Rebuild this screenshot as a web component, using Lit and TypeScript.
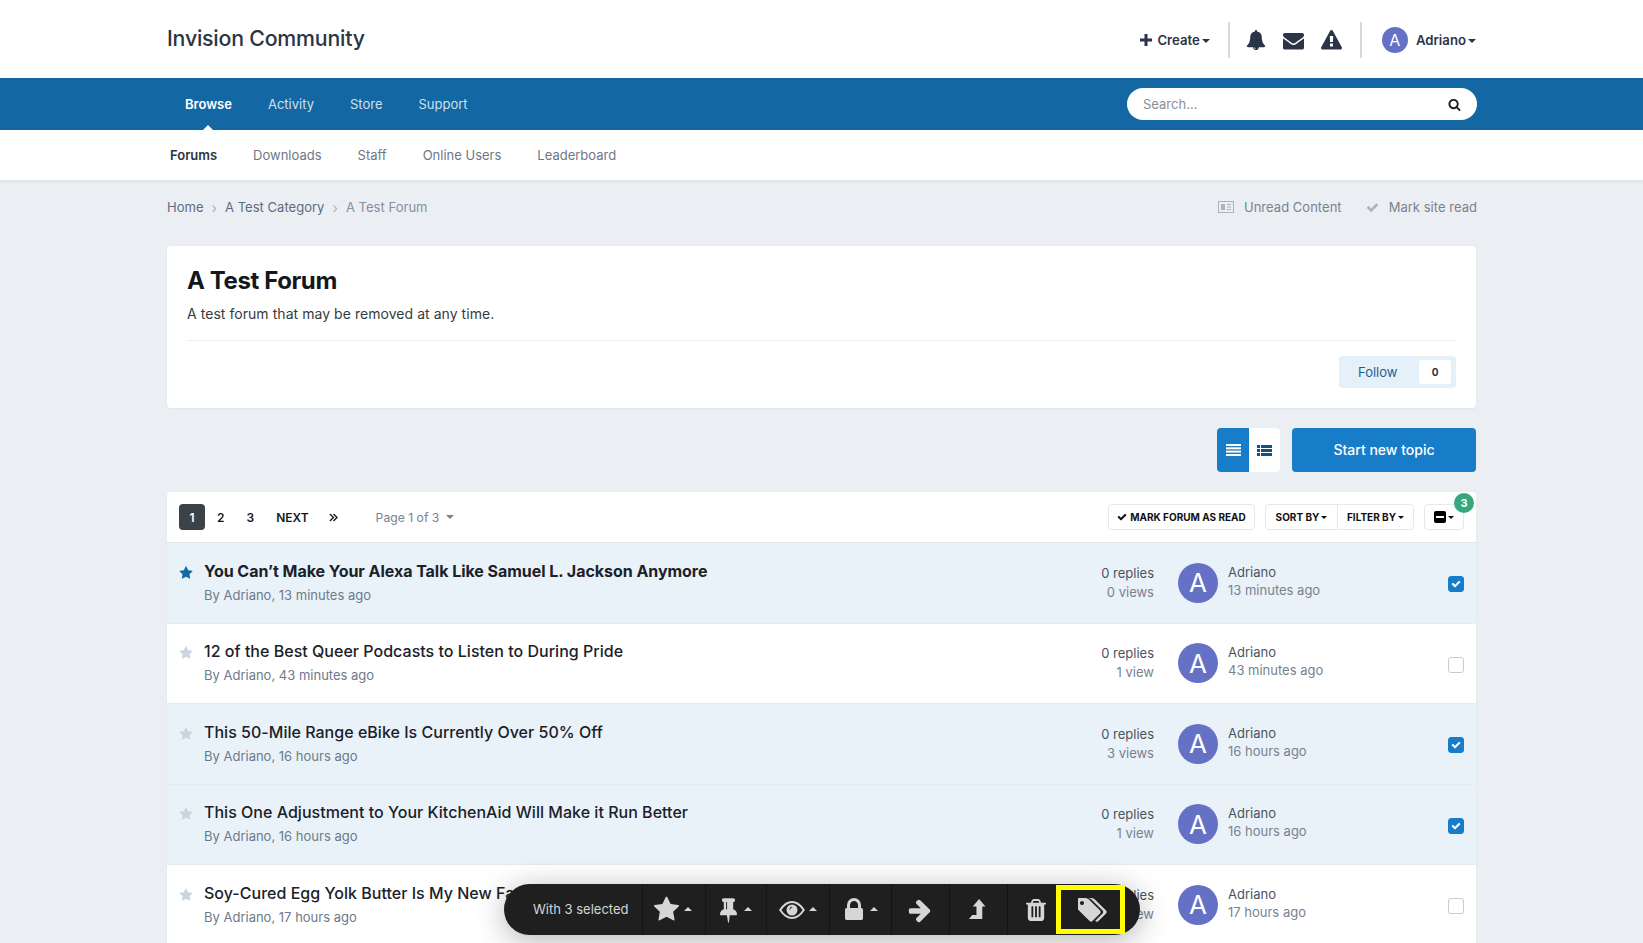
import { LitElement, html, css, svg } from "lit";
import { customElement } from "lit/decorators.js";

const icon = (w: number, h: number, vb: string, d: string, cls = "") =>
  html`<svg class=${cls} width=${w} height=${h} viewBox=${vb} fill="currentColor">${svg`<path d=${d}></path>`}</svg>`;

const STAR = "M1728 647q0 22-26 48l-363 354 86 500q1 7 1 20 0 21-10.5 35.5t-30.5 14.5q-19 0-40-12l-449-236-449 236q-22 12-40 12-21 0-31.5-14.5t-10.5-35.5q0-6 2-20l86-500-364-354q-25-27-25-48 0-37 56-46l502-73 225-455q19-41 49-41t49 41l225 455 502 73q56 9 56 46z";
const CHECK = "M1671 566q0 40-28 68l-724 724-136 136q-28 28-68 28t-68-28l-136-136-362-362q-28-28-28-68t28-68l136-136q28-28 68-28t68 28l294 295 656-657q28-28 68-28t68 28l136 136q28 28 28 68z";
const SEARCH = "M1216 832q0-185-131.5-316.5t-316.5-131.5-316.5 131.5-131.5 316.5 131.5 316.5 316.5 131.5 316.5-131.5 131.5-316.5zm512 832q0 52-38 90t-90 38q-54 0-90-38l-343-342q-179 124-399 124-143 0-273.5-55.5t-225-150-150-225-55.5-273.5 55.5-273.5 150-225 225-150 273.5-55.5 273.5 55.5 225 150 150 225 55.5 273.5q0 220-124 399l343 343q37 37 37 90z";
const BELL = "M912 1696q0-16-16-16-59 0-101.5-42.5t-42.5-101.5q0-16-16-16t-16 16q0 73 51.5 124.5t124.5 51.5q16 0 16-16zm816-288q0 52-38 90t-90 38h-448q0 106-75 181t-181 75-181-75-75-181h-448q-52 0-90-38t-38-90q50-42 91-88t85-119.5 74.5-158.5 50-206 19.5-260q0-152 117-282.5t307-158.5q-8-19-8-39 0-40 28-68t68-28 68 28 28 68q0 20-8 39 190 28 307 158.5t117 282.5q0 139 19.5 260t50 206 74.5 158.5 85 119.5 91 88z";
const ENVELOPE = "M1792 710v794q0 66-47 113t-113 47h-1472q-66 0-113-47t-47-113v-794q44 49 101 87 362 246 497 345 57 42 92.5 65.5t94.5 48 110 24.5h2q51 0 110-24.5t94.5-48 92.5-65.5q170-123 498-345 57-39 100-87zm0-294q0 79-49 151t-122 123q-376 261-468 325-10 7-42.5 30.5t-54 38-52 32.5-57.5 27-50 9h-2q-23 0-50-9t-57.5-27-52-32.5-54-38-42.5-30.5q-91-64-262-182.5t-205-142.5q-62-42-117-115.5t-55-136.5q0-78 41.5-130t118.5-52h1472q65 0 112.5 47t47.5 113z";
const WARNING = "M1024 1375v-190q0-14-9.5-23.5t-22.5-9.5h-192q-13 0-22.5 9.5t-9.5 23.5v190q0 14 9.5 23.5t22.5 9.5h192q13 0 22.5-9.5t9.5-23.5zm-2-374l18-459q0-12-10-19-13-11-24-11h-220q-11 0-24 11-10 7-10 21l17 457q0 10 10 16.5t24 6.5h185q14 0 23.5-6.5t10.5-16.5zm-14-934l768 1408q35 63-2 126-17 29-46.5 46t-63.5 17h-1536q-34 0-63.5-17t-46.5-46q-37-63-2-126l768-1408q17-31 47-49t65-18 65 18 47 49z";
const LOCK = "M320 768h512v-192q0-106-75-181t-181-75-181 75-75 181v192zm832 96v576q0 40-28 68t-68 28h-960q-40 0-68-28t-28-68v-576q0-40 28-68t68-28h32v-192q0-184 132-316t316-132 316 132 132 316v192h32q40 0 68 28t28 68z";
const ARROW = "M1600 960q0 54-37 91l-651 651q-39 37-91 37-51 0-90-37l-75-75q-38-38-38-91t38-91l293-293h-704q-52 0-84.5-37.5t-32.5-90.5v-128q0-53 32.5-90.5t84.5-37.5h704l-293-294q-38-36-38-90t38-90l75-75q38-38 90-38 53 0 91 38l651 651q37 35 37 90z";
const PIN = "M480 864v-448q0-14-9-23t-23-9-23 9-9 23v448q0 14 9 23t23 9 23-9 9-23zm672 352q0 26-19 45t-45 19h-429l-51 483q-2 12-10.5 20.5t-20.5 8.5h-1q-27 0-32-27l-76-485h-404q-26 0-45-19t-19-45q0-123 78.5-221.5t177.5-98.5v-512q-52 0-90-38t-38-90 38-90 90-38h640q52 0 90 38t38 90-38 90-90 38v512q99 0 177.5 98.5t78.5 221.5z";
const TRASH = "M512 1376v-704q0-14-9-23t-23-9h-64q-14 0-23 9t-9 23v704q0 14 9 23t23 9h64q14 0 23-9t9-23zm256 0v-704q0-14-9-23t-23-9h-64q-14 0-23 9t-9 23v704q0 14 9 23t23 9h64q14 0 23-9t9-23zm256 0v-704q0-14-9-23t-23-9h-64q-14 0-23 9t-9 23v704q0 14 9 23t23 9h64q14 0 23-9t9-23zm-544-992h448l-48-117q-7-9-17-11h-317q-10 2-17 11zm928 32v64q0 14-9 23t-23 9h-96v948q0 83-47 143.5t-113 60.5h-832q-66 0-113-58.5t-47-141.5v-952h-96q-14 0-23-9t-9-23v-64q0-14 9-23t23-9h309l70-167q15-37 54-63t79-26h320q40 0 79 26t54 63l70 167h309q14 0 23 9t9 23z";
const TAGS = "M384 448q0-53-37.5-90.5t-90.5-37.5-90.5 37.5-37.5 90.5 37.5 90.5 90.5 37.5 90.5-37.5 37.5-90.5zm1067 576q0 53-37 90l-491 492q-39 37-91 37-53 0-90-37l-715-716q-38-37-64.5-101t-26.5-117v-416q0-52 38-90t90-38h416q53 0 117 26.5t102 64.5l715 714q37 39 37 91zm384 0q0 53-37 90l-491 492q-39 37-91 37-36 0-59-14t-53-45l470-470q37-37 37-90 0-52-37-91l-715-714q-38-38-102-64.5t-117-26.5h224q53 0 117 26.5t102 64.5l715 714q37 39 37 91z";

const rows = [
  { title: "You Can’t Make Your Alexa Talk Like Samuel L. Jackson Anymore", time: "13 minutes ago", views: "0 views", on: true, unread: true },
  { title: "12 of the Best Queer Podcasts to Listen to During Pride", time: "43 minutes ago", views: "1 view", on: false, unread: false },
  { title: "This 50-Mile Range eBike Is Currently Over 50% Off", time: "16 hours ago", views: "3 views", on: true, unread: false },
  { title: "This One Adjustment to Your KitchenAid Will Make it Run Better", time: "16 hours ago", views: "1 view", on: true, unread: false },
  { title: "Soy-Cured Egg Yolk Butter Is My New Favorite Thing", time: "17 hours ago", views: "1 view", on: false, unread: false },
];

@customElement("app-root")
export class AppRoot extends LitElement {
  static styles = css`
    :host {
      display: block;
      height: 943px;
      overflow: hidden;
      position: relative;
      background: #ebeef3;
      font-family: Inter, "Liberation Sans", sans-serif;
      font-size: 13px;
      color: #353c41;
    }
    .wrap {
      width: 1309px;
      margin-left: 167px;
      display: flex;
      align-items: center;
    }
    .top { background: #fff; height: 78px; }
    .top .wrap { height: 78px; }
    .logo { font-size: 21.300px; font-weight: 500; color: #2b3440; letter-spacing: -0.2px; flex: 1; margin-top: -2px; }
    .user-bar { display: flex; align-items: center; color: #2c3547; font-weight: 600; font-size: 13.200px; margin-top: 2px; }
    .create { display: flex; align-items: center; gap: 5px; }
    .sep { width: 2px; height: 36px; background: #d9d9d9; margin: 0 16px 0 18px; }
    .sep.second { margin: 0 20px 0 18px; }
    .bells { display: flex; align-items: center; gap: 17px; }
    .caret { display: inline-block; width: 0; height: 0; border: 4px solid transparent; border-top-color: currentColor; border-bottom: 0; margin-left: 2px; vertical-align: 2px; }
    .avatar { border-radius: 50%; background: #6571c4; color: #fff; display: flex; align-items: center; justify-content: center; flex: none; }
    .avatar.small { width: 26px; height: 26px; font-size: 16px; margin-right: 8px; font-weight: 400; }
    .avatar.big { width: 40px; height: 40px; font-size: 26px; font-weight: 400; }
    .nav { background: #1367a2; height: 52px; }
    .nav .wrap { height: 52px; }
    .nav-links { flex: 1; display: flex; align-items: center; height: 100%; color: #cfe0ed; }
    .nav-links span { padding: 0 18px; position: relative; height: 100%; display: flex; align-items: center; }
    .nav-links .active { color: #fff; font-weight: 600; }
    .nav-links .active::after {
      content: "";
      position: absolute;
      left: 50%;
      bottom: 0;
      margin-left: -5px;
      border: 5px solid transparent;
      border-top: 0;
      border-bottom-color: #fff;
    }
    .search {
      width: 350px;
      height: 32px;
      margin-right: -1px;
      box-sizing: border-box;
      background: #fff;
      border-radius: 16px;
      padding: 0 16px;
      display: flex;
      align-items: center;
      justify-content: space-between;
      color: #8b8f96;
    }
    .search svg { color: #1a1f26; }
    .sub { background: #fff; height: 51px; border-bottom: 1px solid #dfe3e9; box-sizing: border-box; box-shadow: 0 1px 3px rgba(0, 0, 0, 0.06); }
    .sub .wrap { height: 49px; padding-left: 3px; box-sizing: border-box; gap: 36px; color: #6d7786; }
    .sub b { color: #2b3440; font-weight: 600; }
    .crumbs { height: 52px; justify-content: space-between; color: #5f6b7c; letter-spacing: 0.03px; }
    .crumbs > div { display: flex; align-items: center; }
    .crumbs .chev { color: #a9b1bd; margin: 0 8px; font-size: 14px; }
    .crumbs .here { color: #8590a0; }
    .crumbs .right { color: #79838f; margin-right: -1px; }
    .crumbs .right svg { color: #acb3bd; margin-right: 10px; }
    .crumbs .right span + svg { margin-left: 24px; }
    .card { width: 1309px; margin: 13px 0 0 167px; background: #fff; border-radius: 4px; box-shadow: 0 1px 3px rgba(0, 0, 0, 0.05); box-sizing: border-box; }
    .head { height: 162px; padding: 20px 20px 0; }
    .head h1 { font-size: 24px; line-height: 30px; font-weight: 700; color: #14181d; margin: 0; letter-spacing: -0.4px; }
    .head p { margin: 6px 0 0; line-height: 24px; font-size: 14px; letter-spacing: 0.05px; }
    .head hr { border: 0; border-top: 1px solid #eceef1; margin: 14px 0 15px; }
    .follow-row { display: flex; justify-content: flex-end; }
    .follow {
      width: 117px;
      height: 32px;
      box-sizing: border-box;
      padding: 4px 5px 4px 4px;
      border-radius: 4px;
      background: #e6f0f8;
      color: #1d5f92;
      display: flex;
      align-items: center;
      justify-content: space-between;
    }
    .follow span:first-child { padding-left: 15px; }
    .follow .count { width: 32px; height: 24px; background: #fff; border-radius: 3px; display: flex; align-items: center; justify-content: center; color: #333; font-weight: 700; font-size: 10px; }
    .actions { height: 44px; margin-top: 20px; justify-content: flex-end; gap: 12px; }
    .toggle { display: flex; height: 44px; border-radius: 4px; overflow: hidden; background: #fff; }
    .toggle div { width: 31px; display: flex; align-items: center; justify-content: center; color: #13517f; }
    .toggle .on { background: #177dc9; color: #fff; width: 32px; }
    .start {
      width: 184px;
      height: 44px;
      padding-bottom: 2px;
      box-sizing: border-box;
      background: #177dc9;
      color: #fff;
      border-radius: 4px;
      font-size: 14px;
      font-weight: 500;
      display: flex;
      align-items: center;
      justify-content: center;
    }
    .list { margin-top: 20px; }
    .tools { height: 51px; box-sizing: border-box; padding: 0 12px; display: flex; align-items: center; border-bottom: 1px solid #e3e6ea; }
    .pages { display: flex; align-items: center; flex: 1; color: #14181d; font-weight: 600; font-size: 12px; }
    .pages .cur { width: 26px; height: 26px; background: #3d4148; color: #fff; border-radius: 4px; display: flex; align-items: center; justify-content: center; }
    .pages .n2 { margin-left: 12px; }
    .pages .n3 { margin-left: 22px; }
    .pages .n4 { margin-left: 22px; }
    .pages .n5 { margin-left: 20px; display: flex; }
    .pages .of { margin-left: 38px; color: #78828f; font-weight: 400; display: flex; align-items: center; font-size: 12.200px; }
    .pages .of .caret { margin-left: 7px; }
    .btn {
      height: 26px;
      box-sizing: border-box;
      border: 1px solid #e6e8eb;
      border-radius: 4px;
      display: flex;
      align-items: center;
      font-size: 10px;
      font-weight: 700;
      color: #111;
    }
    .btn .caret { border-width: 3px; border-bottom: 0; }
    .btn.mark { width: 147px; justify-content: center; gap: 3px; margin-right: 10px; }
    .btn.group { width: 149px; margin-right: 10px; }
    .btn.group span { height: 100%; display: flex; align-items: center; justify-content: center; box-sizing: border-box; }
    .btn.group span:first-child { width: 71px; }
    .btn.group span + span { border-left: 1px solid #e6e8eb; flex: 1; }
    .btn.pick { width: 40px; justify-content: center; position: relative; }
    .minus { width: 12px; height: 12px; background: #000; border-radius: 2px; position: relative; }
    .minus::after { content: ""; position: absolute; left: 2px; right: 2px; top: 5px; height: 2px; background: #fff; }
    .badge { position: absolute; right: -11px; top: -12px; width: 20px; height: 20px; border-radius: 50%; background: #36a880; color: #fff; font-size: 11px; display: flex; align-items: center; justify-content: center; }
    .row { height: 80.500px; box-sizing: border-box; padding: 0 12px; display: flex; align-items: center; border-bottom: 1px solid #e6e9ed; }
    .row.on { background: #e9f2f8; }
    .star { width: 14px; color: #c9d5e2; margin-right: 11px; flex: none; margin-top: -20px; display: flex; }
    .star.unread { color: #126aa4; }
    .main { flex: 1; min-width: 0; margin-top: -2px; }
    .main .t { font-size: 16px; line-height: 22px; font-weight: 500; color: #1b2129; letter-spacing: 0.02px; }
    .main .t.unread { font-weight: 700; letter-spacing: -0.04px; }
    .main .m { margin-top: 4px; color: #6d7a8b; line-height: 18px; }
    .stats { width: 120px; text-align: right; margin-right: 24px; line-height: 19px; color: #4b545e; }
    .stats div + div { color: #78828f; }
    .latest { width: 220px; margin-left: 10px; margin-top: -4px; line-height: 18px; color: #4b545e; }
    .latest div + div { color: #78828f; }
    .box { width: 16px; height: 16px; box-sizing: border-box; border: 1px solid #c6ccd3; border-radius: 3px; background: #fff; margin-top: 3px; display: flex; align-items: center; justify-content: center; color: #fff; }
    .box.on { background: #177dc9; border-color: #177dc9; }
    .bulk {
      position: absolute;
      left: 504px;
      top: 884px;
      width: 636px;
      height: 51px;
      border-radius: 26px;
      background: #1f1f1f;
      color: #d6d6d6;
      box-shadow: 0 5px 30px rgba(0, 0, 0, 0.3);
      display: flex;
      align-items: stretch;
    }
    .bulk .label { width: 138px; padding: 0 0 2px 29px; box-sizing: border-box; display: flex; align-items: center; }
    .cell { display: flex; align-items: center; justify-content: center; gap: 4px; border-left: 1px solid #141414; box-sizing: border-box; flex: none; }
    .cell.w63 { width: 63px; }
    .cell.w62 { width: 62px; }
    .cell.w61 { width: 61px; }
    .cell.w58 { width: 58px; padding-right: 2px; }
    .cell.fav { padding-right: 3px; }
    .cell.pin { gap: 7px; }
    .cell.lock { gap: 7px; padding-left: 1px; }
    .up { width: 0; height: 0; border: 4px solid transparent; border-bottom-color: currentColor; border-top: 0; margin-bottom: 1px; }
    .cell.tag {
      border: 5px solid #ffff00;
      width: 69px;
      height: 49px;
      margin: 1px 0 0 -9px;
      padding-left: 5px;
      position: relative;
    }
  `;

  private row(r: (typeof rows)[number]) {
    return html`
      <div class="row ${r.on ? "on" : ""}">
        <div class="star ${r.unread ? "unread" : ""}">${icon(14, 14, "0 0 1792 1792", STAR)}</div>
        <div class="main">
          <div class="t ${r.unread ? "unread" : ""}">${r.title}</div>
          <div class="m">By Adriano, ${r.time}</div>
        </div>
        <div class="stats"><div>0 replies</div><div>${r.views}</div></div>
        <div class="avatar big">A</div>
        <div class="latest"><div>Adriano</div><div>${r.time}</div></div>
        <div class="box ${r.on ? "on" : ""}">${r.on ? icon(10, 10, "0 0 1792 1792", CHECK) : ""}</div>
      </div>
    `;
  }

  render() {
    const lines = html`<svg width="15" height="12" viewBox="0 0 15 12" fill="currentColor"><rect width="15" height="2" y="0"></rect><rect width="15" height="2" y="3.300"></rect><rect width="15" height="2" y="6.600"></rect><rect width="15" height="2" y="10"></rect></svg>`;
    const grid = html`<svg width="15" height="11" viewBox="0 0 15 11" fill="currentColor"><rect width="3" height="3"></rect><rect x="4" width="11" height="3"></rect><rect y="4" width="3" height="3"></rect><rect x="4" y="4" width="11" height="3"></rect><rect y="8" width="3" height="3"></rect><rect x="4" y="8" width="11" height="3"></rect></svg>`;
    return html`
      <div class="top">
        <div class="wrap">
          <div class="logo">Invision Community</div>
          <div class="user-bar">
            <div class="create">
              ${icon(12, 12, "0 0 12 12", "M4.500 0h3v4.500H12v3H7.500V12h-3V7.500H0v-3h4.500z")}
              <span>Create<i class="caret"></i></span>
            </div>
            <div class="sep"></div>
            <div class="bells">
              ${icon(20, 22, "0 0 1792 1792", BELL)} ${icon(21, 21, "0 0 1792 1792", ENVELOPE)} ${icon(21, 21, "0 0 1792 1792", WARNING)}
            </div>
            <div class="sep second"></div>
            <div class="avatar small">A</div>
            <span>Adriano<i class="caret"></i></span>
          </div>
        </div>
      </div>
      <div class="nav">
        <div class="wrap">
          <div class="nav-links">
            <span class="active">Browse</span><span>Activity</span><span>Store</span><span>Support</span>
          </div>
          <div class="search"><span>Search...</span>${icon(13, 13, "0 0 1792 1792", SEARCH)}</div>
        </div>
      </div>
      <div class="sub">
        <div class="wrap">
          <b>Forums</b><span>Downloads</span><span>Staff</span><span>Online Users</span><span>Leaderboard</span>
        </div>
      </div>
      <div class="wrap crumbs">
        <div>
          <span>Home</span><span class="chev">›</span><span>A Test Category</span><span class="chev">›</span><span class="here">A Test Forum</span>
        </div>
        <div class="right">
          <svg width="16" height="12" viewBox="0 0 16 12" fill="none" stroke="currentColor"><rect x="0.500" y="0.500" width="15" height="11"></rect><rect x="3" y="3" width="4" height="6" fill="currentColor" stroke="none"></rect><path d="M9 3.500h4M9 6h4M9 8.500h4"></path></svg>
          <span>Unread Content</span>
          ${icon(13, 13, "0 0 1792 1792", CHECK)}
          <span>Mark site read</span>
        </div>
      </div>
      <div class="card head">
        <h1>A Test Forum</h1>
        <p>A test forum that may be removed at any time.</p>
        <hr />
        <div class="follow-row">
          <div class="follow"><span>Follow</span><span class="count">0</span></div>
        </div>
      </div>
      <div class="wrap actions">
        <div class="toggle"><div class="on">${lines}</div><div>${grid}</div></div>
        <div class="start">Start new topic</div>
      </div>
      <div class="card list">
        <div class="tools">
          <div class="pages">
            <span class="cur">1</span><span class="n2">2</span><span class="n3">3</span><span class="n4">NEXT</span>
            <span class="n5"><svg width="9" height="9" viewBox="0 0 10 10" fill="none" stroke="currentColor" stroke-width="1.500"><path d="M1 1l4 4-4 4M5 1l4 4-4 4"></path></svg></span>
            <span class="of">Page 1 of 3<i class="caret"></i></span>
          </div>
          <div class="btn mark">${icon(10, 10, "0 0 1792 1792", CHECK)}MARK FORUM AS READ</div>
          <div class="btn group"><span>SORT BY<i class="caret"></i></span><span>FILTER BY<i class="caret"></i></span></div>
          <div class="btn pick"><i class="minus"></i><i class="caret"></i><span class="badge">3</span></div>
        </div>
        ${rows.map((r) => this.row(r))}
      </div>
      <div class="bulk">
        <div class="label">With 3 selected</div>
        <div class="cell w63 fav">${icon(27, 27, "0 0 1792 1792", STAR)}<i class="up"></i></div>
        <div class="cell w61 pin">${icon(17, 27, "0 0 1152 1792", PIN)}<i class="up"></i></div>
        <div class="cell w63">
          <svg width="26" height="18" viewBox="0 0 26 18" fill="none" stroke="currentColor" stroke-width="2"><path d="M1.200 9C4.500 4 8.500 1 13 1s8.500 3 11.800 8C21.500 14 17.500 17 13 17S4.500 14 1.200 9z"></path><circle cx="13" cy="9" r="5.500" fill="currentColor" stroke="none"></circle><path d="M10.800 8.500a2.600 2.600 0 0 1 2.400-2.500" stroke="#1f1f1f" stroke-width="1"></path></svg>
          <i class="up"></i>
        </div>
        <div class="cell w62 lock">${icon(18, 28, "0 0 1152 1792", LOCK)}<i class="up"></i></div>
        <div class="cell w58">${icon(26, 26, "0 0 1792 1792", ARROW)}</div>
        <div class="cell w58"><svg width="17" height="21" viewBox="0 0 16 21" preserveAspectRatio="none" fill="currentColor"><path d="M9.500 0l6 7.500h-3V20H0l3-4h4V7.500H3.500z"></path></svg></div>
        <div class="cell w58">${icon(20, 26, "0 0 1408 1792", TRASH)}</div>
        <div class="cell tag">${icon(30, 28, "0 0 1920 1792", TAGS)}</div>
      </div>
    `;
  }
}
